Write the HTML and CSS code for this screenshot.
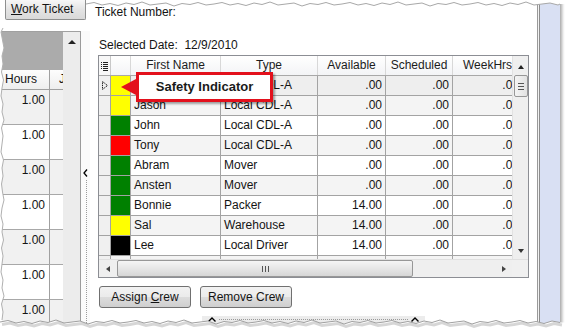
FILE: index.html
```html
<!DOCTYPE html>
<html lang="en">
<head>
    <meta charset="UTF-8">
    <meta name="viewport" content="width=device-width, initial-scale=1.0">
    <title>Work Ticket — Assign Crew</title>
    <link rel="stylesheet" href="styles.css">
</head>
<body>
<div class="shot">
    <div class="side">
        <div class="tab"><u>W</u>ork Ticket</div>
        <div class="side-lower">
            <div class="hours-grid">
                <div class="hg-cols">
                    <div class="hg-group"></div>
                    <div class="hg-head"><span class="hg-hours">Hours</span><span class="hg-j">J</span></div>
                    <div class="hg-row alt"><span class="hg-val">1.00</span></div>
                    <div class="hg-row"><span class="hg-val">1.00</span></div>
                    <div class="hg-row alt"><span class="hg-val">1.00</span></div>
                    <div class="hg-row"><span class="hg-val">1.00</span></div>
                    <div class="hg-row alt"><span class="hg-val">1.00</span></div>
                    <div class="hg-row"><span class="hg-val">1.00</span></div>
                    <div class="hg-row alt"><span class="hg-val">1.00</span></div>
                </div>
                <div class="hg-scroll"><span class="tri-up"></span></div>
            </div>
            <div class="vsplit">
                <svg class="chev" width="5" height="8" viewBox="0 0 5 8"><polyline points="4,0.5 1,4 4,7.5" fill="none" stroke="#000" stroke-width="1.3"/></svg>
                <span class="dots"></span>
            </div>
        </div>
    </div>

    <div class="main">
        <div class="ticket">Ticket Number:</div>
        <div class="date">Selected Date:&nbsp; 12/9/2010</div>

        <div class="grid">
            <div class="grid-body">
                <div class="table">
                    <div class="row head">
                        <div class="c ind">
                            <svg width="7" height="10" viewBox="0 0 7 10">
                                <g stroke="#222" stroke-width="1">
                                    <line x1="0" y1="1.5" x2="1" y2="1.5"/><line x1="2" y1="1.5" x2="7" y2="1.5"/>
                                    <line x1="0" y1="3.5" x2="1" y2="3.5"/><line x1="2" y1="3.5" x2="7" y2="3.5"/>
                                    <line x1="0" y1="5.5" x2="1" y2="5.5"/><line x1="2" y1="5.5" x2="7" y2="5.5"/>
                                    <line x1="0" y1="7.5" x2="1" y2="7.5"/><line x1="2" y1="7.5" x2="7" y2="7.5"/>
                                    <line x1="2" y1="9.5" x2="7" y2="9.5"/>
                                </g>
                            </svg>
                        </div>
                        <div class="c sw"></div>
                        <div class="c name">First Name</div>
                        <div class="c type">Type</div>
                        <div class="c num">Available</div>
                        <div class="c num sched">Scheduled</div>
                        <div class="c num week">WeekHrs</div>
                    </div>
                    <div class="row focus">
                        <div class="c ind">
                            <svg width="6" height="9" viewBox="0 0 6 9"><polygon points="0.5,0.5 5.5,4.5 0.5,8.5" fill="none" stroke="#222" stroke-width="1" stroke-dasharray="1.5 0.8"/></svg>
                        </div>
                        <div class="c sw yellow"></div>
                        <div class="c name"></div>
                        <div class="c type">Local CDL-A</div>
                        <div class="c num">.00</div>
                        <div class="c num sched">.00</div>
                        <div class="c num week">.00</div>
                    </div>
                    <div class="row alt">
                        <div class="c ind"></div><div class="c sw yellow"></div>
                        <div class="c name">Jason</div><div class="c type">Local CDL-A</div>
                        <div class="c num">.00</div><div class="c num sched">.00</div><div class="c num week">.00</div>
                    </div>
                    <div class="row">
                        <div class="c ind"></div><div class="c sw green"></div>
                        <div class="c name">John</div><div class="c type">Local CDL-A</div>
                        <div class="c num">.00</div><div class="c num sched">.00</div><div class="c num week">.00</div>
                    </div>
                    <div class="row alt">
                        <div class="c ind"></div><div class="c sw red"></div>
                        <div class="c name">Tony</div><div class="c type">Local CDL-A</div>
                        <div class="c num">.00</div><div class="c num sched">.00</div><div class="c num week">.00</div>
                    </div>
                    <div class="row">
                        <div class="c ind"></div><div class="c sw green"></div>
                        <div class="c name">Abram</div><div class="c type">Mover</div>
                        <div class="c num">.00</div><div class="c num sched">.00</div><div class="c num week">.00</div>
                    </div>
                    <div class="row alt">
                        <div class="c ind"></div><div class="c sw green"></div>
                        <div class="c name">Ansten</div><div class="c type">Mover</div>
                        <div class="c num">.00</div><div class="c num sched">.00</div><div class="c num week">.00</div>
                    </div>
                    <div class="row">
                        <div class="c ind"></div><div class="c sw green"></div>
                        <div class="c name">Bonnie</div><div class="c type">Packer</div>
                        <div class="c num">14.00</div><div class="c num sched">.00</div><div class="c num week">.00</div>
                    </div>
                    <div class="row alt">
                        <div class="c ind"></div><div class="c sw yellow"></div>
                        <div class="c name">Sal</div><div class="c type">Warehouse</div>
                        <div class="c num">14.00</div><div class="c num sched">.00</div><div class="c num week">.00</div>
                    </div>
                    <div class="row">
                        <div class="c ind"></div><div class="c sw black"></div>
                        <div class="c name">Lee</div><div class="c type">Local Driver</div>
                        <div class="c num">14.00</div><div class="c num sched">.00</div><div class="c num week">.00</div>
                    </div>
                    <div class="row alt">
                        <div class="c ind"></div><div class="c sw"></div>
                        <div class="c name"></div><div class="c type"></div>
                        <div class="c num"></div><div class="c num sched"></div><div class="c num week"></div>
                    </div>
                </div>
                <div class="vscroll">
                    <span class="tri-up small"></span>
                    <div class="vthumb"><i></i><i></i><i></i></div>
                    <span class="vtrack"></span>
                    <span class="tri-down"></span>
                </div>
            </div>
            <div class="hscroll">
                <span class="harrow"><span class="tri-left"></span></span>
                <div class="hthumb"><i></i><i></i><i></i></div>
                <span class="htrack"></span>
                <span class="harrow"><span class="tri-right"></span></span>
                <span class="corner"></span>
            </div>
        </div>

        <div class="buttons">
            <button class="btn">Assign <u>C</u>rew</button>
            <button class="btn">Remove Crew</button>
        </div>

        <div class="hsplit">
            <svg width="8" height="5" viewBox="0 0 8 5"><polyline points="0.5,4.5 4,1 7.5,4.5" fill="none" stroke="#000" stroke-width="1.4"/></svg>
            <span class="hdots"></span>
            <svg width="8" height="5" viewBox="0 0 8 5"><polyline points="0.5,4.5 4,1 7.5,4.5" fill="none" stroke="#000" stroke-width="1.4"/></svg>
        </div>
    </div>

    <div class="rstrip"></div>

    <div class="callout">Safety Indicator</div>
</div>

<svg class="tears" width="565" height="332" viewBox="0 0 565 332">
    <polygon fill="#fff" points="86,0 86,4 94,2.5 102,5 110,3.5 118,5.5 126,3 134,4.5 142,2 150,5 158,4 166,3 174,6 182,3.5 190,4.5 198,2.5 206,5 214,4 222,2.5 230,5 238,3.5 246,5.5 254,3 262,4.5 270,2 278,5 286,4 294,3 302,6 310,3.5 318,4.5 326,2.5 334,5 342,4 350,2.5 358,5 366,3.5 374,5.5 382,3 390,4.5 398,2 406,5 414,4 422,3 430,6 438,3.5 446,4.5 454,2.5 462,5 470,4 478,2.5 486,5 494,3.5 502,5.5 510,3 518,4.5 526,2 534,5 542,4 550,3 558,5 560,4 565,4 565,0"/>
    <polyline fill="none" stroke="#a8a8a8" stroke-width="1" points="86,4 94,2.5 102,5 110,3.5 118,5.5 126,3 134,4.5 142,2 150,5 158,4 166,3 174,6 182,3.5 190,4.5 198,2.5 206,5 214,4 222,2.5 230,5 238,3.5 246,5.5 254,3 262,4.5 270,2 278,5 286,4 294,3 302,6 310,3.5 318,4.5 326,2.5 334,5 342,4 350,2.5 358,5 366,3.5 374,5.5 382,3 390,4.5 398,2 406,5 414,4 422,3 430,6 438,3.5 446,4.5 454,2.5 462,5 470,4 478,2.5 486,5 494,3.5 502,5.5 510,3 518,4.5 526,2 534,5 542,4 550,3 558,5 560,4"/>
    <polygon fill="#fff" points="0,0 2,0 3.5,8 1.5,16 3,24 1,32 2.5,40 4,48 2,56 3,64 1.5,72 3.5,80 2,88 1,96 3,104 2,112 4,120 1.5,128 3,136 2,144 1,152 3.5,160 2,168 3,176 1.5,184 2.5,192 4,200 2,208 1,216 3,224 2,232 3.5,240 1.5,248 3,256 2,264 1,272 3,280 2,288 4,296 1.5,304 3,312 2,320 2.5,326 0,326"/>
    <polyline fill="none" stroke="#b0b0b0" stroke-width="1" points="3,28 1,32 2.5,40 4,48 2,56 3,64 1.5,72 3.5,80 2,88 1,96 3,104 2,112 4,120 1.5,128 3,136 2,144 1,152 3.5,160 2,168 3,176 1.5,184 2.5,192 4,200 2,208 1,216 3,224 2,232 3.5,240 1.5,248 3,256 2,264 1,272 3,280 2,288 4,296 1.5,304 3,312 2,320"/>
    <polygon fill="#fff" points="0,322 8,320.5 16,323 24,321.5 32,323.5 40,321 48,322.5 56,320 64,323 72,322 80,321 88,324 96,321.5 104,322.5 112,320.5 120,323 128,322 136,320.5 144,323 152,321.5 160,323.5 168,321 176,322.5 184,320 192,323 200,322 208,321 216,324 224,321.5 232,322.5 240,320.5 248,323 256,322 264,320.5 272,323 280,321.5 288,323.5 296,321 304,322.5 312,320 320,323 328,322 336,321 344,324 352,321.5 360,322.5 368,320.5 376,323 384,322 392,320.5 400,323 408,321.5 416,323.5 424,321 432,322.5 440,320 448,323 456,322 464,321 472,324 480,321.5 488,322.5 496,320.5 504,323 512,322 520,320.5 528,323 536,321.5 544,323.5 552,321 560,322.5 565,322.5 565,332 0,332"/>
    <polyline fill="none" stroke="rgba(0,0,0,0.16)" stroke-width="3" transform="translate(2,2.5)" points="0,322 8,320.5 16,323 24,321.5 32,323.5 40,321 48,322.5 56,320 64,323 72,322 80,321 88,324 96,321.5 104,322.5 112,320.5 120,323 128,322 136,320.5 144,323 152,321.5 160,323.5 168,321 176,322.5 184,320 192,323 200,322 208,321 216,324 224,321.5 232,322.5 240,320.5 248,323 256,322 264,320.5 272,323 280,321.5 288,323.5 296,321 304,322.5 312,320 320,323 328,322 336,321 344,324 352,321.5 360,322.5 368,320.5 376,323 384,322 392,320.5 400,323 408,321.5 416,323.5 424,321 432,322.5 440,320 448,323 456,322 464,321 472,324 480,321.5 488,322.5 496,320.5 504,323 512,322 520,320.5 528,323 536,321.5 544,323.5 552,321 560,322.5"/>
    <polyline fill="none" stroke="#a0a0a0" stroke-width="1" points="0,322 8,320.5 16,323 24,321.5 32,323.5 40,321 48,322.5 56,320 64,323 72,322 80,321 88,324 96,321.5 104,322.5 112,320.5 120,323 128,322 136,320.5 144,323 152,321.5 160,323.5 168,321 176,322.5 184,320 192,323 200,322 208,321 216,324 224,321.5 232,322.5 240,320.5 248,323 256,322 264,320.5 272,323 280,321.5 288,323.5 296,321 304,322.5 312,320 320,323 328,322 336,321 344,324 352,321.5 360,322.5 368,320.5 376,323 384,322 392,320.5 400,323 408,321.5 416,323.5 424,321 432,322.5 440,320 448,323 456,322 464,321 472,324 480,321.5 488,322.5 496,320.5 504,323 512,322 520,320.5 528,323 536,321.5 544,323.5 552,321 560,322.5"/>
</svg>
</body>
</html>
```

FILE: styles.css
```css
* {
    box-sizing: border-box;
}
body {
    margin: 0;
    width: 565px;
    height: 332px;
    position: relative;
    overflow: hidden;
    background: #fff;
    color: #141414;
    font-family: "Liberation Sans", Arial, sans-serif;
    font-size: 12px;
}
.shot {
    position: relative;
    width: 560px;
    height: 326px;
    display: flex;
    background: #fff;
    box-shadow: 2px 1px 3px rgba(0, 0, 0, 0.35);
}

/* left side: tab + hours grid */
.side {
    width: 90px;
    flex: none;
    display: flex;
    flex-direction: column;
}
.tab {
    margin-left: 5px;
    width: 81px;
    height: 20px;
    padding-left: 5px;
    line-height: 19px;
    font-size: 12px;
    border: 1px solid #8e8f8f;
    border-top: none;
    border-radius: 0 0 2px 2px;
    background: linear-gradient(#f7f7f7, #e4e4e4 50%, #d9d9d9);
}
.side-lower {
    flex: 1;
    display: flex;
    margin-top: 11px;
}
.hours-grid {
    width: 81px;
    display: flex;
    border-top: 1px solid #a0a0a0;
    border-right: 1px solid #9a9a9a;
}
.hg-cols {
    width: 63px;
    overflow: hidden;
}
.hg-group {
    height: 38px;
    background: #ababab;
}
.hg-head {
    height: 20px;
    display: flex;
    border-bottom: 1px solid #a0a0a0;
    background: linear-gradient(#fdfdfd, #eeeeee);
    line-height: 19px;
}
.hg-hours {
    width: 50px;
    flex: none;
    padding-left: 5px;
    border-right: 1px solid #a0a0a0;
}
.hg-j {
    padding-left: 9px;
}
.hg-row {
    height: 35px;
    display: flex;
    border-bottom: 1px solid #a8a8a8;
    background: #fff;
}
.hg-row.alt {
    background: #f1f1f1;
}
.hg-val {
    width: 50px;
    flex: none;
    text-align: right;
    padding: 3px 4px 0 0;
    line-height: 14px;
    border-right: 1px solid #a0a0a0;
}
.hg-scroll {
    width: 17px;
    flex: none;
    background: #ececec;
    display: flex;
    justify-content: center;
    padding-top: 8px;
}
.vsplit {
    width: 9px;
    flex: none;
    display: flex;
    flex-direction: column;
    align-items: center;
    padding-top: 138px;
    background: #fafafa;
}
.chev {
    display: block;
}
.dots {
    flex: 1;
    margin-top: 3px;
    margin-left: 1px;
    border-left: 1px dotted #9a9a9a;
}

/* arrows */
.tri-up {
    width: 0;
    height: 0;
    border-left: 4px solid transparent;
    border-right: 4px solid transparent;
    border-bottom: 4px solid #222;
}
.tri-up.small {
    border-left-width: 3.5px;
    border-right-width: 3.5px;
}
.tri-down {
    width: 0;
    height: 0;
    border-left: 3.5px solid transparent;
    border-right: 3.5px solid transparent;
    border-top: 4px solid #333;
}
.tri-left {
    width: 0;
    height: 0;
    border-top: 3.5px solid transparent;
    border-bottom: 3.5px solid transparent;
    border-right: 4px solid #444;
}
.tri-right {
    width: 0;
    height: 0;
    border-top: 3.5px solid transparent;
    border-bottom: 3.5px solid transparent;
    border-left: 4px solid #444;
}

/* main panel */
.main {
    width: 448px;
    flex: none;
    display: flex;
    flex-direction: column;
    border-right: 1px solid #9a9a9a;
}
.ticket {
    height: 22px;
    padding: 5px 0 0 5px;
    line-height: 15px;
}
.date {
    margin-top: 16px;
    padding-left: 9px;
    line-height: 14px;
}
.grid {
    margin: 3px 0 0 8px;
    width: 431px;
    height: 223px;
    border: 1px solid #8c8e94;
    display: flex;
    flex-direction: column;
}
.grid-body {
    height: 203px;
    display: flex;
}
.table {
    width: 413px;
    flex: none;
    overflow: hidden;
}
.row {
    height: 20px;
    display: flex;
    border-bottom: 1px solid #a3a3a3;
    background: #fff;
}
.row.alt {
    background: #f4f4f4;
}
.row.focus {
    background: #eeeeee;
}
.c {
    flex: none;
    padding: 0 3px;
    line-height: 19px;
    white-space: nowrap;
    overflow: hidden;
    border-right: 1px solid #a3a3a3;
}
.c.ind {
    width: 12px;
    padding: 0;
    background: #f0f0f0;
    display: flex;
    align-items: center;
    justify-content: center;
}
.c.sw {
    width: 20px;
    padding: 0;
}
.c.name {
    width: 90px;
}
.c.type {
    width: 97px;
}
.c.num {
    width: 68px;
    text-align: right;
}
.c.sched {
    width: 67px;
}
.c.week {
    width: 70px;
}
.yellow {
    background: #ffff00;
}
.green {
    background: #008000;
}
.red {
    background: #ff0000;
}
.black {
    background: #000;
}
.row.head {
    background: linear-gradient(#ffffff, #f3f4f6);
    border-bottom: 1px solid #a8a8a8;
    color: #1c1c1c;
}
.row.head .c {
    text-align: center;
    border-right-color: #d8d8d8;
}
.row.head .c.ind {
    background: #f7f7f7;
    border-right-color: #c8c8c8;
}

/* scrollbars */
.vscroll {
    width: 16px;
    flex: none;
    background: #efefef;
    border-left: 1px solid #e2e2e2;
    display: flex;
    flex-direction: column;
    align-items: center;
    padding: 9px 0 6px;
}
.vthumb {
    width: 14px;
    height: 22px;
    margin-top: 6px;
    border: 1px solid #979797;
    border-radius: 2px;
    background: linear-gradient(to right, #f4f4f4, #e2e2e2);
    display: flex;
    flex-direction: column;
    justify-content: center;
    align-items: center;
    gap: 2px;
}
.vthumb i {
    width: 6px;
    height: 1px;
    background: #555;
}
.vtrack {
    flex: 1;
}
.hscroll {
    height: 18px;
    display: flex;
    align-items: stretch;
    background: #efefef;
    border-top: 1px solid #e0e0e0;
}
.harrow {
    width: 17px;
    display: flex;
    align-items: center;
    justify-content: center;
}
.hthumb {
    width: 296px;
    margin: 0 0 0 1px;
    border: 1px solid #979797;
    border-radius: 2px;
    background: linear-gradient(#f5f5f5, #e6e6e6 50%, #d6d6d6);
    display: flex;
    justify-content: center;
    align-items: center;
    gap: 2px;
}
.hthumb i {
    width: 1px;
    height: 6px;
    background: #555;
}
.htrack {
    flex: 1;
}
.corner {
    width: 16px;
    background: #f0f0f0;
}

/* buttons */
.buttons {
    display: flex;
    gap: 9px;
    margin: 8px 0 0 9px;
}
.btn {
    width: 92px;
    height: 22px;
    padding: 0;
    border: 1px solid #707070;
    border-radius: 3px;
    background: linear-gradient(#f2f2f2, #ebebeb 50%, #dddddd 50%, #cfcfcf);
    font-family: "Liberation Sans", Arial, sans-serif;
    font-size: 12px;
    color: #141414;
    line-height: 20px;
}
.hsplit {
    width: 223px;
    height: 7px;
    margin: 8px 0 0 112px;
    padding: 0 6px;
    background: #ececec;
    display: flex;
    align-items: center;
    gap: 3px;
}
.hsplit svg {
    display: block;
}
.hdots {
    flex: 1;
    border-top: 1px dotted #9a9a9a;
}

/* right strip */
.rstrip {
    width: 22px;
    flex: none;
    background: linear-gradient(to right, #f2f2f2 0, #f2f2f2 1px, #8d8d8d 1px, #8d8d8d 2px, #d9e0f3 2px);
}

/* callout over the grid */
.callout {
    position: absolute;
    left: 136px;
    top: 72px;
    width: 137px;
    height: 30px;
    border: 3px solid #e3101c;
    background: #fff;
    box-shadow: 2px 2px 2px rgba(0, 0, 0, 0.35);
    text-align: center;
    font-weight: bold;
    font-size: 13px;
    line-height: 23px;
    color: #1a1a1a;
}
.callout::before {
    content: "";
    position: absolute;
    left: -18px;
    top: 4px;
    width: 0;
    height: 0;
    border-top: 8px solid transparent;
    border-bottom: 8px solid transparent;
    border-right: 15px solid #e3101c;
}

.tears {
    position: absolute;
    left: 0;
    top: 0;
    pointer-events: none;
}
```
